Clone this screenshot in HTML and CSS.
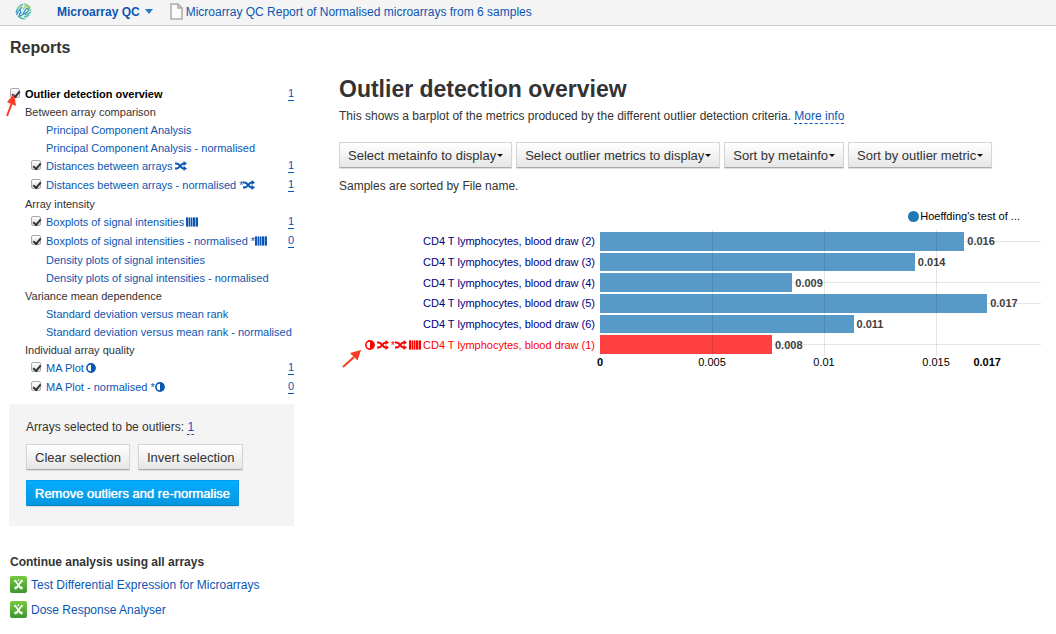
FILE: index.html
```html
<!DOCTYPE html>
<html lang="en">
<head>
<meta charset="utf-8">
<title>Microarray QC Report</title>
<link rel="stylesheet" href="styles.css">
</head>
<body>
<svg class="defs" aria-hidden="true">
  <symbol id="shuffle" viewBox="0 0 12 10">
    <path d="M0 2.5h1.600c3.200 0 4 5 7 5h1M0 7.5h1.600c3.200 0 4-5 7-5h1" fill="none" stroke="currentColor" stroke-width="2"/>
    <path d="M8.600 0L12 2.5 8.600 5zM8.600 5L12 7.5 8.600 10z" fill="currentColor"/>
  </symbol>
  <symbol id="barcode" viewBox="0 0 12 10">
    <path d="M0 0.5h2v9H0zM3 .5h1v9H3zM5 .5h1v9H5zM7 .5h2v9H7zM10 .5h2v9h-2z" fill="currentColor"/>
    <path d="M0 .5h12v9H0z" fill="currentColor" opacity=".45"/>
  </symbol>
  <symbol id="contrast" viewBox="0 0 10 10">
    <circle cx="5" cy="5" r="4.1" fill="none" stroke="currentColor" stroke-width="1.6"/>
    <path d="M5 1a4 4 0 0 1 0 8z" fill="currentColor"/>
  </symbol>
  <symbol id="arrow" viewBox="0 0 20 20">
    <path d="M1 19L12 9" fill="none" stroke="#fb3b24" stroke-width="2"/>
    <path d="M19 2L15.5 12.5 8 5z" fill="#fb3b24"/>
  </symbol>
  <symbol id="app" viewBox="0 0 17 17">
    <rect width="17" height="17" rx="2" fill="url(#leaf)"/>
    <path d="M5.500 5l5 7M11.500 5l-5 7" stroke="#fff" stroke-width="1.700"/>
    <path d="M4 5.500L6 4M13 5.500L11 4M8.500 3.500v1.600" stroke="#fff" stroke-width="1.200"/>
    <path d="M5.300 10.500a1.500 1.500 0 1 0 1.600 2.200l1.600-2 1.600 2a1.500 1.500 0 1 0 1.600-2.200z" fill="#fff" opacity=".9"/>
  </symbol>
  <linearGradient id="leaf" x2="0" y2="1"><stop stop-color="#77ca3e"/><stop offset="1" stop-color="#3d9631"/></linearGradient>
</svg>

<header class="topbar">
  <svg class="logo" viewBox="0 0 17 17" aria-hidden="true">
    <circle cx="8.500" cy="8.500" r="8" fill="#d9efe6"/>
    <g fill="none" stroke-width="1.100">
      <path d="M1 10C2 4 6 2 8 1M1.500 12C3 7 6 5 7 4" stroke="#3f9bd0"/>
      <path d="M9 1c3 0 5 2 6.500 4M10 3c2 0 4 2 6 5" stroke="#7cc36a"/>
      <path d="M5 10c-2 3 1 4 3 1s3-7 5-5-3 5-5 5M5 6l1 5" stroke="#2b86c4"/>
      <path d="M10 12c2 0 4-2 6-3M9 14c2 0 4-1 5-2M3 13c2 2 4 3 7 3" stroke="#3aaea5"/>
      <path d="M2 6l3-3M8 6l3-3" stroke="#a4cd45"/>
    </g>
  </svg>
  <button class="app-menu" type="button">Microarray QC <span class="menu-caret"></span></button>
  <a class="doc" href="#report">
    <svg class="page" viewBox="0 0 13 17" aria-hidden="true"><path d="M1 1h7l4 4v11H1zM8 1v4h4" fill="#fbfbfb" stroke="#aaa" stroke-width="1.500"/></svg>
    Microarray QC Report of Normalised microarrays from 6 samples</a>
</header>

<div class="layout">
  <aside class="sidebar">
    <h2 class="side-title">Reports</h2>
    <div class="reports">
      <div class="row top checked"><input type="checkbox" id="r0" checked><label class="name current" for="r0">Outlier detection overview</label><a class="count" href="#c">1</a>
        <svg class="pointer pointer-check" viewBox="0 0 12 24" aria-hidden="true"><path d="M2 22L7 9" stroke="#fb3b24" stroke-width="2"/><path d="M9 0l2 12-9-4z" fill="#fb3b24"/></svg></div>
      <div class="row group">Between array comparison</div>
      <div class="row"><a class="name" href="#r">Principal Component Analysis</a></div>
      <div class="row"><a class="name" href="#r">Principal Component Analysis - normalised</a></div>
      <div class="row checked"><input type="checkbox" aria-label="Distances between arrays" checked><a class="name" href="#r">Distances between arrays<svg class="ico wide spaced"><use href="#shuffle"/></svg></a><a class="count" href="#c">1</a></div>
      <div class="row checked"><input type="checkbox" aria-label="Distances between arrays - normalised" checked><a class="name" href="#r">Distances between arrays - normalised *<svg class="ico wide"><use href="#shuffle"/></svg></a><a class="count" href="#c">1</a></div>
      <div class="row group">Array intensity</div>
      <div class="row checked"><input type="checkbox" aria-label="Boxplots of signal intensities" checked><a class="name" href="#r">Boxplots of signal intensities<svg class="ico wide spaced"><use href="#barcode"/></svg></a><a class="count" href="#c">1</a></div>
      <div class="row checked"><input type="checkbox" aria-label="Boxplots of signal intensities - normalised" checked><a class="name" href="#r">Boxplots of signal intensities - normalised *<svg class="ico wide"><use href="#barcode"/></svg></a><a class="count" href="#c">0</a></div>
      <div class="row"><a class="name" href="#r">Density plots of signal intensities</a></div>
      <div class="row"><a class="name" href="#r">Density plots of signal intensities - normalised</a></div>
      <div class="row group">Variance mean dependence</div>
      <div class="row"><a class="name" href="#r">Standard deviation versus mean rank</a></div>
      <div class="row"><a class="name" href="#r">Standard deviation versus mean rank - normalised</a></div>
      <div class="row group">Individual array quality</div>
      <div class="row checked"><input type="checkbox" aria-label="MA Plot" checked><a class="name" href="#r">MA Plot<svg class="ico spaced"><use href="#contrast"/></svg></a><a class="count" href="#c">1</a></div>
      <div class="row checked"><input type="checkbox" aria-label="MA Plot - normalised" checked><a class="name" href="#r">MA Plot - normalised *<svg class="ico"><use href="#contrast"/></svg></a><a class="count" href="#c">0</a></div>
    </div>
    <section class="panel">
      <p class="selected">Arrays selected to be outliers: <a class="dashed" href="#s">1</a></p>
      <div class="actions">
        <button class="btn" type="button">Clear selection</button>
        <button class="btn" type="button">Invert selection</button>
      </div>
      <button class="btn primary" type="button">Remove outliers and re-normalise</button>
    </section>
    <section class="next">
      <h3 class="next-title">Continue analysis using all arrays</h3>
      <a class="next-link" href="#t"><svg class="app-ico" aria-hidden="true"><use href="#app"/></svg>Test Differential Expression for Microarrays</a>
      <a class="next-link" href="#d"><svg class="app-ico" aria-hidden="true"><use href="#app"/></svg>Dose Response Analyser</a>
    </section>
  </aside>

  <main class="main" id="report">
    <h1 class="title">Outlier detection overview</h1>
    <p class="intro">This shows a barplot of the metrics produced by the different outlier detection criteria. <a class="dashed" href="#m">More info</a></p>
    <div class="toolbar">
      <button class="btn" type="button">Select metainfo to display<span class="caret"></span></button>
      <button class="btn" type="button">Select outlier metrics to display<span class="caret"></span></button>
      <button class="btn" type="button">Sort by metainfo<span class="caret"></span></button>
      <button class="btn" type="button">Sort by outlier metric<span class="caret"></span></button>
    </div>
    <p class="sorted">Samples are sorted by File name.</p>
    <div class="legend"><span class="dot"></span>Hoeffding's test of ...</div>
    <div class="chart">
      <div class="labels">
        <span>CD4 T lymphocytes, blood draw (2)</span>
        <span>CD4 T lymphocytes, blood draw (3)</span>
        <span>CD4 T lymphocytes, blood draw (4)</span>
        <span>CD4 T lymphocytes, blood draw (5)</span>
        <span>CD4 T lymphocytes, blood draw (6)</span>
        <span class="outlier"><svg class="ico"><use href="#contrast"/></svg><svg class="ico wide"><use href="#shuffle"/></svg><span class="starred">*<svg class="ico wide"><use href="#shuffle"/></svg></span><svg class="ico wide"><use href="#barcode"/></svg>CD4 T lymphocytes, blood draw (1)
          <svg class="pointer pointer-flag" aria-hidden="true"><use href="#arrow"/></svg></span>
      </div>
      <div class="plot">
        <div class="track line"><span class="bar" style="width:82.6%"></span><b>0.016</b></div>
        <div class="track"><span class="bar" style="width:71.4%"></span><b>0.014</b></div>
        <div class="track line"><span class="bar" style="width:43.6%"></span><b>0.009</b></div>
        <div class="track line"><span class="bar" style="width:87.8%"></span><b>0.017</b></div>
        <div class="track"><span class="bar" style="width:57.5%"></span><b>0.011</b></div>
        <div class="track line"><span class="bar red" style="width:39%"></span><b>0.008</b></div>
        <i class="rule" style="left:25.4%"></i><i class="rule" style="left:50.8%"></i><i class="rule" style="left:76.2%"></i>
      </div>
      <div class="axis">
        <span class="tick end" style="left:0%">0</span>
        <span class="tick" style="left:25.4%">0.005</span>
        <span class="tick" style="left:50.8%">0.01</span>
        <span class="tick" style="left:76.2%">0.015</span>
        <span class="tick end" style="left:87.8%">0.017</span>
      </div>
    </div>
  </main>
</div>
</body>
</html>
```

FILE: styles.css
```css
* { box-sizing: border-box; }
body {
  margin: 0;
  background: #fff;
  color: #333;
  font: 11px/18px "Liberation Sans", Arial, sans-serif;
}
h1, h2, h3, p { margin: 0; }
a { color: #0b56b3; text-decoration: none; }
button { font-family: inherit; }
.defs { position: absolute; width: 0; height: 0; }

.topbar {
  display: flex;
  align-items: center;
  height: 26px;
  padding: 0 15px 2px;
  background: #f4f4f4;
  border-bottom: 1px solid #ccc;
  font-size: 12px;
}
.logo { width: 17px; height: 17px; margin-right: 25px; }
.app-menu {
  display: flex;
  align-items: center;
  gap: 5px;
  margin-right: 17px;
  padding: 0;
  border: 0;
  background: none;
  color: #0b56b3;
  font-size: 12px;
  font-weight: bold;
}
.menu-caret { border: 4px solid transparent; border-top: 5px solid #1a78c8; border-bottom: 0; }
.doc { display: flex; align-items: center; gap: 3px; }
.page { width: 13px; height: 17px; }

.layout { display: grid; grid-template-columns: 285px minmax(0, 1fr); gap: 45px; padding: 0 15px 0 9px; }
.side-title { padding: 12px 1px 0; font-size: 16px; line-height: 20px; }
.reports { padding-top: 26px; }
.row { position: relative; display: flex; align-items: center; height: 18px; padding-left: 37px; }
.row.checked { height: 19px; padding: 0 0 1px 22px; }
.row.top { padding-left: 1px; padding-bottom: 0; }
.row.group { padding-left: 16px; }
.row input {
  appearance: none;
  width: 10px;
  height: 10px;
  margin: 0 5px 2px 0;
  border: 1px solid #aaa;
  border-radius: 2px;
  background: linear-gradient(#fff, #ddd);
}
.row input:checked::before {
  content: "";
  display: block;
  width: 6px;
  height: 3px;
  margin: 2px 1px;
  border: solid #333;
  border-width: 0 0 2px 2px;
  transform: rotate(-50deg);
}
.name.current { color: #000; font-weight: bold; }
.count { margin-left: auto; line-height: 13px; border-bottom: 1px dashed #0b56b3; }
.ico { width: 10px; height: 10px; vertical-align: -1px; }
.ico.wide { width: 12px; }
.ico.spaced { margin-left: 2px; }
.pointer { position: absolute; }
.pointer-check { left: -4px; top: 10px; width: 12px; height: 24px; }
.pointer-flag { left: -23px; top: 13px; width: 20px; height: 20px; }

.panel { margin-top: 7px; padding: 14px 17px 20px; background: #f4f4f4; }
.selected, .intro, .sorted { font-size: 12px; }
.dashed { border-bottom: 1px dashed #0b56b3; }
.actions { display: flex; gap: 8px; margin: 8px 0 10px; }
.btn {
  height: 26px;
  padding: 0 8px;
  border: 1px solid #d4d4d4;
  border-bottom-color: #aaa;
  border-radius: 1px;
  background: linear-gradient(#fff, #e6e6e6);
  box-shadow: 0 1px 1px #ddd;
  color: #333;
  font-size: 13px;
  white-space: nowrap;
}
.btn.primary {
  border-color: #069ae6;
  border-bottom-color: #0782c4;
  background: linear-gradient(#04adff, #0796e0);
  color: #fff;
  text-shadow: 0 0 1px #fff;
}
.next { padding: 27px 1px 0; }
.next-title { font-size: 12px; line-height: 18px; }
.next-link { display: flex; align-items: center; gap: 4px; height: 17px; margin: 5px 0 8px; font-size: 12px; }
.app-ico { width: 17px; height: 17px; }

.main { padding-top: 48px; }
.title { font-size: 23px; line-height: 30px; }
.intro { padding-top: 3px; }
.toolbar { display: flex; flex-wrap: wrap; gap: 4px; margin-top: 17px; }
.caret {
  display: inline-block;
  margin-left: 1px;
  border: 3px solid transparent;
  border-top-color: #111;
  border-bottom: 0;
  vertical-align: 3px;
}
.sorted { padding-top: 9px; }
.legend { display: flex; align-items: center; justify-content: flex-end; gap: 1px; margin-top: 12px; padding-right: 21px; color: #000; }
.dot { width: 11px; height: 11px; border-radius: 50%; background: #1f77b4; }
.chart { display: grid; grid-template-columns: 256px minmax(0, 1fr); column-gap: 5px; padding-top: 7px; }
.labels, .plot { display: grid; grid-template-rows: repeat(6, 1fr); gap: 2px; height: 122px; }
.labels > span { display: flex; align-items: center; justify-content: flex-end; color: #000080; white-space: nowrap; }
.labels .outlier { position: relative; justify-self: end; gap: 2px; color: #f00; }
.starred { display: flex; align-items: center; }
.plot { position: relative; }
.track { display: flex; align-items: center; color: #404040; }
.track.line { background: linear-gradient(#e5e5e5, #e5e5e5) center / 100% 1px no-repeat; }
.bar { height: 100%; margin-right: 3px; background: #5799c7; }
.bar.red { background: #ff4040; }
.rule { position: absolute; top: -2px; bottom: -2px; width: 1px; background: #000; opacity: .1; }
.axis { position: relative; grid-column: 2; height: 18px; line-height: 16px; color: #000; }
.tick { position: absolute; transform: translateX(-50%); }
.tick.end { font-weight: bold; }
```
